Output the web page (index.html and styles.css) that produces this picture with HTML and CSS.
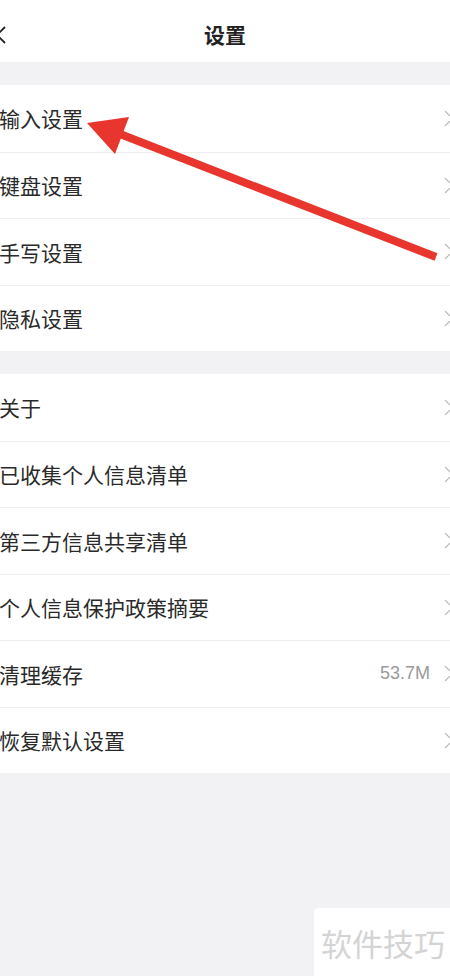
FILE: index.html
```html
<!DOCTYPE html>
<html lang="zh-CN">
<head>
    <meta charset="UTF-8">
    <meta name="viewport" content="width=device-width, initial-scale=1.0">
    <title>设置</title>
    <link rel="stylesheet" href="styles.css">
</head>
<body>
    <header class="top-bar">
        <svg class="back-icon" width="10" height="18" viewBox="0 0 10 18">
            <path d="M8 1 L0 9 L8 17" fill="none" stroke="#222" stroke-width="1.8"/>
        </svg>
        <h1>设置</h1>
    </header>

    <main>
        <ul class="group">
            <li class="row"><span class="label">输入设置</span><span class="chevron"></span></li>
            <li class="row"><span class="label">键盘设置</span><span class="chevron"></span></li>
            <li class="row"><span class="label">手写设置</span><span class="chevron"></span></li>
            <li class="row"><span class="label">隐私设置</span><span class="chevron"></span></li>
        </ul>

        <ul class="group">
            <li class="row"><span class="label">关于</span><span class="chevron"></span></li>
            <li class="row"><span class="label">已收集个人信息清单</span><span class="chevron"></span></li>
            <li class="row"><span class="label">第三方信息共享清单</span><span class="chevron"></span></li>
            <li class="row"><span class="label">个人信息保护政策摘要</span><span class="chevron"></span></li>
            <li class="row"><span class="label">清理缓存</span><span class="value">53.7M</span><span class="chevron"></span></li>
            <li class="row"><span class="label">恢复默认设置</span><span class="chevron"></span></li>
        </ul>
    </main>

    <!-- red annotation arrow drawn over the list -->
    <svg class="annotation" width="450" height="300" viewBox="0 0 450 300">
        <line x1="120" y1="134" x2="436" y2="257" stroke="#e8362e" stroke-width="8"/>
        <polygon points="87,123 129,117 115,154" fill="#e8362e"/>
    </svg>

    <div class="watermark">软件技巧</div>
</body>
</html>
```

FILE: styles.css
```css
/* Global */
body {
    margin: 0;
    background-color: #f2f2f4;
    font-family: "Noto Sans CJK SC", "Noto Sans", sans-serif;
    color: #222;
    min-height: 976px;
    position: relative;
    overflow: hidden;
}

/* Top bar */
.top-bar {
    height: 62px;
    background-color: #fff;
    display: flex;
    align-items: center;
    justify-content: center;
    position: relative;
}

.top-bar h1 {
    margin: 0;
    font-size: 21px;
    font-weight: bold;
    margin-top: 6px;
}

.back-icon {
    position: absolute;
    left: -3px;
    top: 26px;
}

/* Groups */
main {
    padding-top: 23px;
    display: flex;
    flex-direction: column;
    gap: 23px;
}

.group {
    list-style: none;
    margin: 0;
    padding: 0;
    background-color: #fff;
}

.row {
    height: 66.5px;
    box-sizing: border-box;
    display: flex;
    align-items: center;
    border-top: 1px solid #ededef;
}

.row:first-child {
    border-top: none;
}

.label {
    flex: 1;
    font-size: 21px;
    margin-left: -1px;
    color: #2a2a2a;
}

.value {
    font-family: "Liberation Sans", Arial, sans-serif;
    font-size: 18px;
    color: #9a9a9a;
    margin-right: 10px;
}

.chevron {
    width: 10px;
    height: 10px;
    border-top: 1.5px solid #b0b0b0;
    border-right: 1.5px solid #b0b0b0;
    transform: rotate(45deg);
    margin-right: -1px;
}

/* Annotation */
.annotation {
    position: absolute;
    left: 0;
    top: 0;
}

/* Watermark */
.watermark {
    position: absolute;
    right: 0;
    bottom: 0;
    width: 136px;
    height: 68px;
    background-color: #fff;
    border-radius: 4px 0 0 0;
    color: #d4d4d4;
    font-size: 31px;
    display: flex;
    align-items: center;
    padding-left: 7px;
    box-sizing: border-box;
    white-space: nowrap;
}
```
